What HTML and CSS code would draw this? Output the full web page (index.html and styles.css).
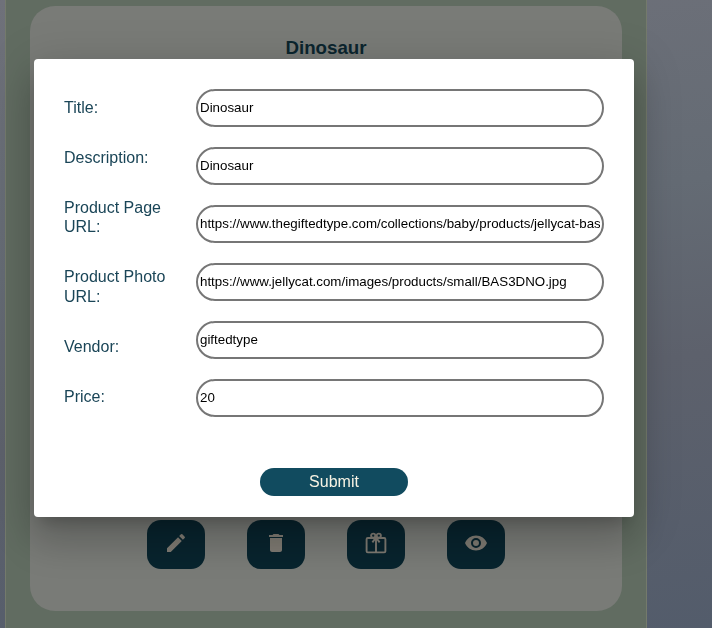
FILE: index.html
```html
<!DOCTYPE html>
<html lang="en">
<head>
<meta charset="utf-8">
<title>Edit gift</title>
<link rel="stylesheet" href="styles.css">
</head>
<body>
<main class="list">
  <article class="card">
    <h2 class="card-title">Dinosaur</h2>
    <div class="actions">
      <button class="action" aria-label="Edit"><svg viewBox="0 0 24 24"><path d="M3 17.25V21h3.75L17.81 9.94l-3.75-3.75L3 17.25zM20.71 7.04c.39-.39.39-1.02 0-1.41l-2.34-2.34a1 1 0 0 0-1.41 0l-1.83 1.83 3.75 3.75 1.83-1.83z"/></svg></button>
      <button class="action" aria-label="Delete"><svg viewBox="0 0 24 24"><path d="M6 19c0 1.1.9 2 2 2h8c1.1 0 2-.9 2-2V7H6v12zM19 4h-3.5l-1-1h-5l-1 1H5v2h14V4z"/></svg></button>
      <button class="action" aria-label="Gift"><svg viewBox="0 0 24 24" class="gift"><rect x="2.600" y="7" width="18.800" height="14.400" rx="1.200"/><path d="M12 7v14M12 6.500L8.400 11.400M12 6.500l3.600 4.900"/><circle cx="9.200" cy="4.700" r="2.100"/><circle cx="14.800" cy="4.700" r="2.100"/></svg></button>
      <button class="action" aria-label="View"><svg viewBox="0 0 24 24"><path d="M12 4.500C7 4.500 2.730 7.610 1 12c1.730 4.390 6 7.500 11 7.500s9.270-3.110 11-7.500c-1.730-4.390-6-7.500-11-7.500zM12 17a5 5 0 1 1 0-10 5 5 0 0 1 0 10zm0-8a3 3 0 1 0 0 6 3 3 0 0 0 0-6z"/></svg></button>
    </div>
  </article>
</main>
<div class="overlay">
  <form class="dialog">
    <div class="fields">
      <div class="labels">
        <label for="title">Title:</label>
        <label for="description">Description:</label>
        <label for="page">Product Page URL:</label>
        <label for="photo">Product Photo URL:</label>
        <label for="vendor">Vendor:</label>
        <label for="price">Price:</label>
      </div>
      <div class="inputs">
        <input id="title" value="Dinosaur">
        <input id="description" value="Dinosaur">
        <input id="page" value="https://www.thegiftedtype.com/collections/baby/products/jellycat-bas">
        <input id="photo" value="https://www.jellycat.com/images/products/small/BAS3DNO.jpg">
        <input id="vendor" value="giftedtype">
        <input id="price" value="20">
      </div>
    </div>
    <button class="submit" type="button">Submit</button>
  </form>
</div>
</body>
</html>
```
FILE: styles.css
```css
* { box-sizing: border-box; }
body {
  margin: 0;
  height: 628px;
  overflow: hidden;
  padding-left: 5px;
  font-family: "Liberation Sans", Arial, sans-serif;
  background: linear-gradient(172deg, #6f717a 0%, #646b74 38%, #5d616c 62%, #535c6b 100%);
}
.list {
  width: 642px;
  height: 628px;
  padding: 6px 24px 17px;
  border: solid #747a6c;
  border-width: 0 1px;
  background: #616c61;
}
.card {
  display: flex;
  flex-direction: column;
  justify-content: space-between;
  align-items: center;
  height: 605px;
  padding: 31px 0 42px;
  border-radius: 25px;
  background: #797b77;
}
.card-title {
  margin: 0;
  font-size: 18.720px;
  line-height: 22px;
  color: #0b252e;
}
.actions { display: flex; gap: 42px; }
.action {
  display: flex;
  align-items: center;
  justify-content: center;
  width: 58px;
  height: 49px;
  padding: 0 1px 4px 0;
  border: 0;
  border-radius: 14px;
  background: #08242e;
}
.action svg { width: 24px; height: 24px; fill: #7f7b73; }
.action .gift { fill: none; stroke: #7f7b73; stroke-width: 1.9; }
.overlay {
  position: fixed;
  inset: 0;
  padding: 59px 0 0 34px;
}
.dialog {
  width: 600px;
  height: 458px;
  padding: 30px;
  border-radius: 4px;
  background: #fff;
  box-shadow: 0 11px 15px -7px rgba(0,0,0,.2), 0 24px 38px 3px rgba(0,0,0,.14), 0 9px 46px 8px rgba(0,0,0,.12);
}
.fields { display: flex; }
.labels {
  display: flex;
  flex-direction: column;
  gap: 30.250px;
  width: 132px;
  padding: 9.100px 20px 0 0;
  font-size: 16px;
  line-height: 19.600px;
  color: #1a4557;
}
.inputs { display: flex; flex: 1; flex-direction: column; gap: 20px; }
.inputs input {
  width: 100%;
  height: 38px;
  padding: 0 2px 2px;
  border: 2px solid #767676;
  border-radius: 20px;
  font: 13.333px "Liberation Sans", Arial, sans-serif;
  color: #000;
  background: #fff;
}
.submit {
  display: block;
  width: 148px;
  height: 28px;
  margin: 51px 0 0 196px;
  padding: 0;
  border: 0;
  border-radius: 14px;
  font: 16px "Liberation Sans", Arial, sans-serif;
  color: #f7f3e4;
  background: #114b5f;
}
```
